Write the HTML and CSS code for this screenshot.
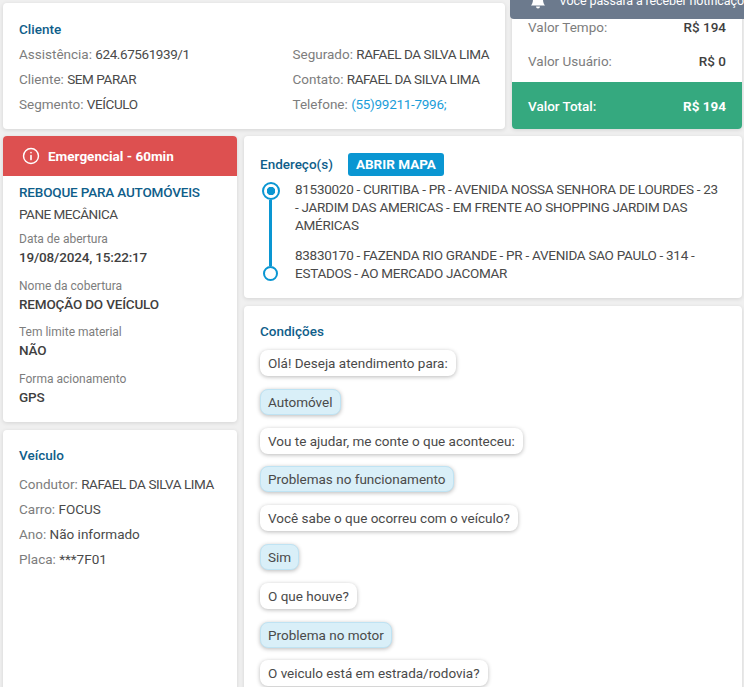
FILE: index.html
```html
<!DOCTYPE html>
<html lang="pt-BR">
<head>
<meta charset="utf-8">
<title>Assistência</title>
<link rel="stylesheet" href="styles.css">
</head>
<body>
<div class="toast">
  <svg class="toast-icon" viewBox="0 0 16 16" width="16" height="16"><path fill="#fff" d="M8 0a1.2 1.2 0 0 1 1.2 1.3C11.4 1.8 13 3.700 13 6c0 3.500.8 5 2 6.500H1C2.200 11 3 9.500 3 6c0-2.300 1.600-4.200 3.800-4.700A1.200 1.200 0 0 1 8 0zM6 13.500h4a2 2 0 0 1-4 0z"/></svg>
  <span>Você passará a receber notificações</span>
</div>
<main class="page">
  <div class="row">
    <section class="card client">
      <h2 class="title">Cliente</h2>
      <div class="client-grid">
        <p class="line"><span class="lbl">Assistência:</span> <span class="up">624.67561939/1</span></p>
        <p class="line"><span class="lbl">Segurado:</span> <span class="up">RAFAEL DA SILVA LIMA</span></p>
        <p class="line"><span class="lbl">Cliente:</span> <span class="up">SEM PARAR</span></p>
        <p class="line"><span class="lbl">Contato:</span> <span class="up">RAFAEL DA SILVA LIMA</span></p>
        <p class="line"><span class="lbl">Segmento:</span> <span class="up">VEÍCULO</span></p>
        <p class="line"><span class="lbl">Telefone:</span> <a class="phone">(55)99211-7996;</a></p>
      </div>
    </section>
    <section class="card values">
      <div class="value-list">
        <div class="value-row"><span class="lbl">Valor Tempo:</span><b>R$ 194</b></div>
        <div class="value-row"><span class="lbl">Valor Usuário:</span><b>R$ 0</b></div>
      </div>
      <div class="value-total"><span>Valor Total:</span><b>R$ 194</b></div>
    </section>
  </div>
  <div class="row lower">
    <div class="side">
      <section class="card service">
        <header class="alert">
          <svg viewBox="0 0 20 20" width="18" height="18"><circle cx="10" cy="10" r="8.300" fill="none" stroke="#fff" stroke-width="1.600"/><path fill="none" stroke="#fff" stroke-width="1.800" stroke-linecap="round" d="M10 9.500v4.500M10 6.200v.1"/></svg>
          <span>Emergencial - 60min</span>
        </header>
        <div class="service-body">
          <h2 class="title caps">REBOQUE PARA AUTOMÓVEIS</h2>
          <p class="problem">PANE MECÂNICA</p>
          <div class="field"><span class="field-lbl">Data de abertura</span><b>19/08/2024, 15:22:17</b></div>
          <div class="field"><span class="field-lbl">Nome da cobertura</span><b>REMOÇÃO DO VEÍCULO</b></div>
          <div class="field"><span class="field-lbl">Tem limite material</span><b>NÃO</b></div>
          <div class="field"><span class="field-lbl">Forma acionamento</span><b>GPS</b></div>
        </div>
      </section>
      <section class="card vehicle">
        <h2 class="title">Veículo</h2>
        <p class="line"><span class="lbl">Condutor:</span> <span class="up">RAFAEL DA SILVA LIMA</span></p>
        <p class="line"><span class="lbl">Carro:</span> FOCUS</p>
        <p class="line"><span class="lbl">Ano:</span> Não informado</p>
        <p class="line"><span class="lbl">Placa:</span> ***7F01</p>
      </section>
    </div>
    <div class="main-col">
      <section class="card address">
        <div class="address-head">
          <h2 class="title">Endereço(s)</h2>
          <button class="map-btn">ABRIR MAPA</button>
        </div>
        <div class="route">
          <div class="track">
            <span class="dot start"></span>
            <span class="rail"></span>
            <span class="dot end"></span>
          </div>
          <div class="stops">
            <p>81530020 - CURITIBA - PR - AVENIDA NOSSA SENHORA DE LOURDES - 23 - JARDIM DAS AMERICAS - EM FRENTE AO SHOPPING JARDIM DAS AMÉRICAS</p>
            <p>83830170 - FAZENDA RIO GRANDE - PR - AVENIDA SAO PAULO - 314 - ESTADOS - AO MERCADO JACOMAR</p>
          </div>
        </div>
      </section>
      <section class="card conditions">
        <h2 class="title">Condições</h2>
        <div class="chat">
          <span class="bubble">Olá! Deseja atendimento para:</span>
          <span class="bubble answer">Automóvel</span>
          <span class="bubble">Vou te ajudar, me conte o que aconteceu:</span>
          <span class="bubble answer">Problemas no funcionamento</span>
          <span class="bubble">Você sabe o que ocorreu com o veículo?</span>
          <span class="bubble answer">Sim</span>
          <span class="bubble">O que houve?</span>
          <span class="bubble answer">Problema no motor</span>
          <span class="bubble">O veiculo está em estrada/rodovia?</span>
          <span class="bubble answer">Não</span>
        </div>
      </section>
    </div>
  </div>
</main>
</body>
</html>
```

FILE: styles.css
```css
* { box-sizing: border-box; }
html, body { height: 687px; overflow: hidden; }
body {
  margin: 0;
  background: #f0f0f0;
  font-family: "Roboto", "Noto Sans", sans-serif;
  font-size: 13.500px;
  color: #4a4a4a;
}
p, h2 { margin: 0; }
.page { padding: 3px 2px 0 3px; display: flex; flex-direction: column; gap: 7px; }
.row { display: flex; gap: 7px; }
.lower { align-items: flex-start; }
.card {
  background: #fff;
  border-radius: 4px;
  box-shadow: 0 1px 4px rgba(0, 0, 0, .12);
}
.title { font-size: 13.500px; font-weight: 500; color: #0f5e8a; line-height: 20px; }
.caps { letter-spacing: -.17px; }
.lbl { color: #7d7d7d; }
.up { letter-spacing: -.42px; }
.line { line-height: 25px; white-space: nowrap; }

.toast {
  position: absolute;
  left: 510px;
  top: -18px;
  width: 240px;
  height: 37px;
  background: #6c7a8d;
  border-radius: 4px;
  color: #fff;
  display: flex;
  align-items: center;
  gap: 13px;
  padding-left: 20px;
  white-space: nowrap;
  overflow: hidden;
  font-size: 12.500px;
  letter-spacing: -.12px;
}
.toast-icon { flex: none; }

.client { flex: none; width: 502px; height: 126px; padding: 16px 16px 0; }
.client-grid { display: grid; grid-template-columns: 273.500px 1fr; margin-top: 3px; }
.phone { color: #1a9dd9; letter-spacing: -.28px; }
.values { flex: 1; height: 126px; display: flex; flex-direction: column; overflow: hidden; }
.value-list { flex: 1; padding: 12px 16px 0; display: flex; flex-direction: column; gap: 9px; }
.value-row { display: flex; justify-content: space-between; line-height: 25px; }
.value-row b { color: #3f3f3f; font-weight: 500; }
.value-total {
  height: 47px;
  background: #35a97f;
  color: #fff;
  padding: 0 16px;
  display: flex;
  justify-content: space-between;
  align-items: center;
  font-weight: 500;
}
.value-total b { font-weight: 700; }

.side { flex: none; width: 234px; display: flex; flex-direction: column; gap: 8px; }
.alert {
  height: 40px;
  background: #dd5050;
  color: #fff;
  border-radius: 4px 4px 0 0;
  display: flex;
  align-items: center;
  gap: 8px;
  padding-left: 19px;
  font-weight: 700;
}
.service { height: 286px; }
.service-body { padding: 6px 16px 0; }
.problem { line-height: 24px; letter-spacing: -.5px; }
.field { display: flex; flex-direction: column; margin-top: 4px; }
.field-lbl { font-size: 12px; color: #7d7d7d; line-height: 18px; }
.field b { font-weight: 500; color: #3f3f3f; line-height: 19px; letter-spacing: -.17px; }
.field + .field { margin-top: 9.500px; }
.vehicle { height: 400px; padding: 15px 16px 0; }
.vehicle .title { margin-bottom: 7px; }

.main-col { flex: 1; min-width: 0; display: flex; flex-direction: column; gap: 8px; }
.address { height: 162px; padding: 16px 16px 0; }
.address-head { display: flex; align-items: center; gap: 15px; height: 24px; }
.map-btn {
  border: 0;
  height: 23px;
  padding: 0 8px;
  border-radius: 3px;
  background: #0a96d2;
  color: #fff;
  font: 700 13.500px "Roboto", sans-serif;
}
.route { display: flex; gap: 14px; margin-top: 5px; }
.track { flex: none; width: 21px; display: flex; flex-direction: column; align-items: center; height: 100px; padding-top: 1px; }
.dot { flex: none; border-radius: 50%; border: 2px solid #0a96d2; background: #fff; }
.start { width: 18px; height: 18px; background: radial-gradient(circle, #0a96d2 0 4px, #fff 4.500px); }
.end { width: 15px; height: 15px; }
.rail { flex: 1; width: 3px; background: #0a96d2; }
.stops { display: flex; flex-direction: column; gap: 12px; line-height: 18px; letter-spacing: -.28px; margin-top: -1px; padding-right: 6px; }

.conditions { height: 500px; padding: 15px 16px 0; }
.chat { display: flex; flex-direction: column; align-items: flex-start; gap: 12.800px; margin-top: 9px; }
.bubble {
  height: 26px;
  line-height: 26px;
  padding: 0 8px;
  background: #fff;
  border-radius: 8px;
  box-shadow: 0 1px 4px rgba(0, 0, 0, .28);
}
.answer { background: #d9eff8; border: 1px solid #bfe3f3; line-height: 24px; padding: 0 7px; }
```
